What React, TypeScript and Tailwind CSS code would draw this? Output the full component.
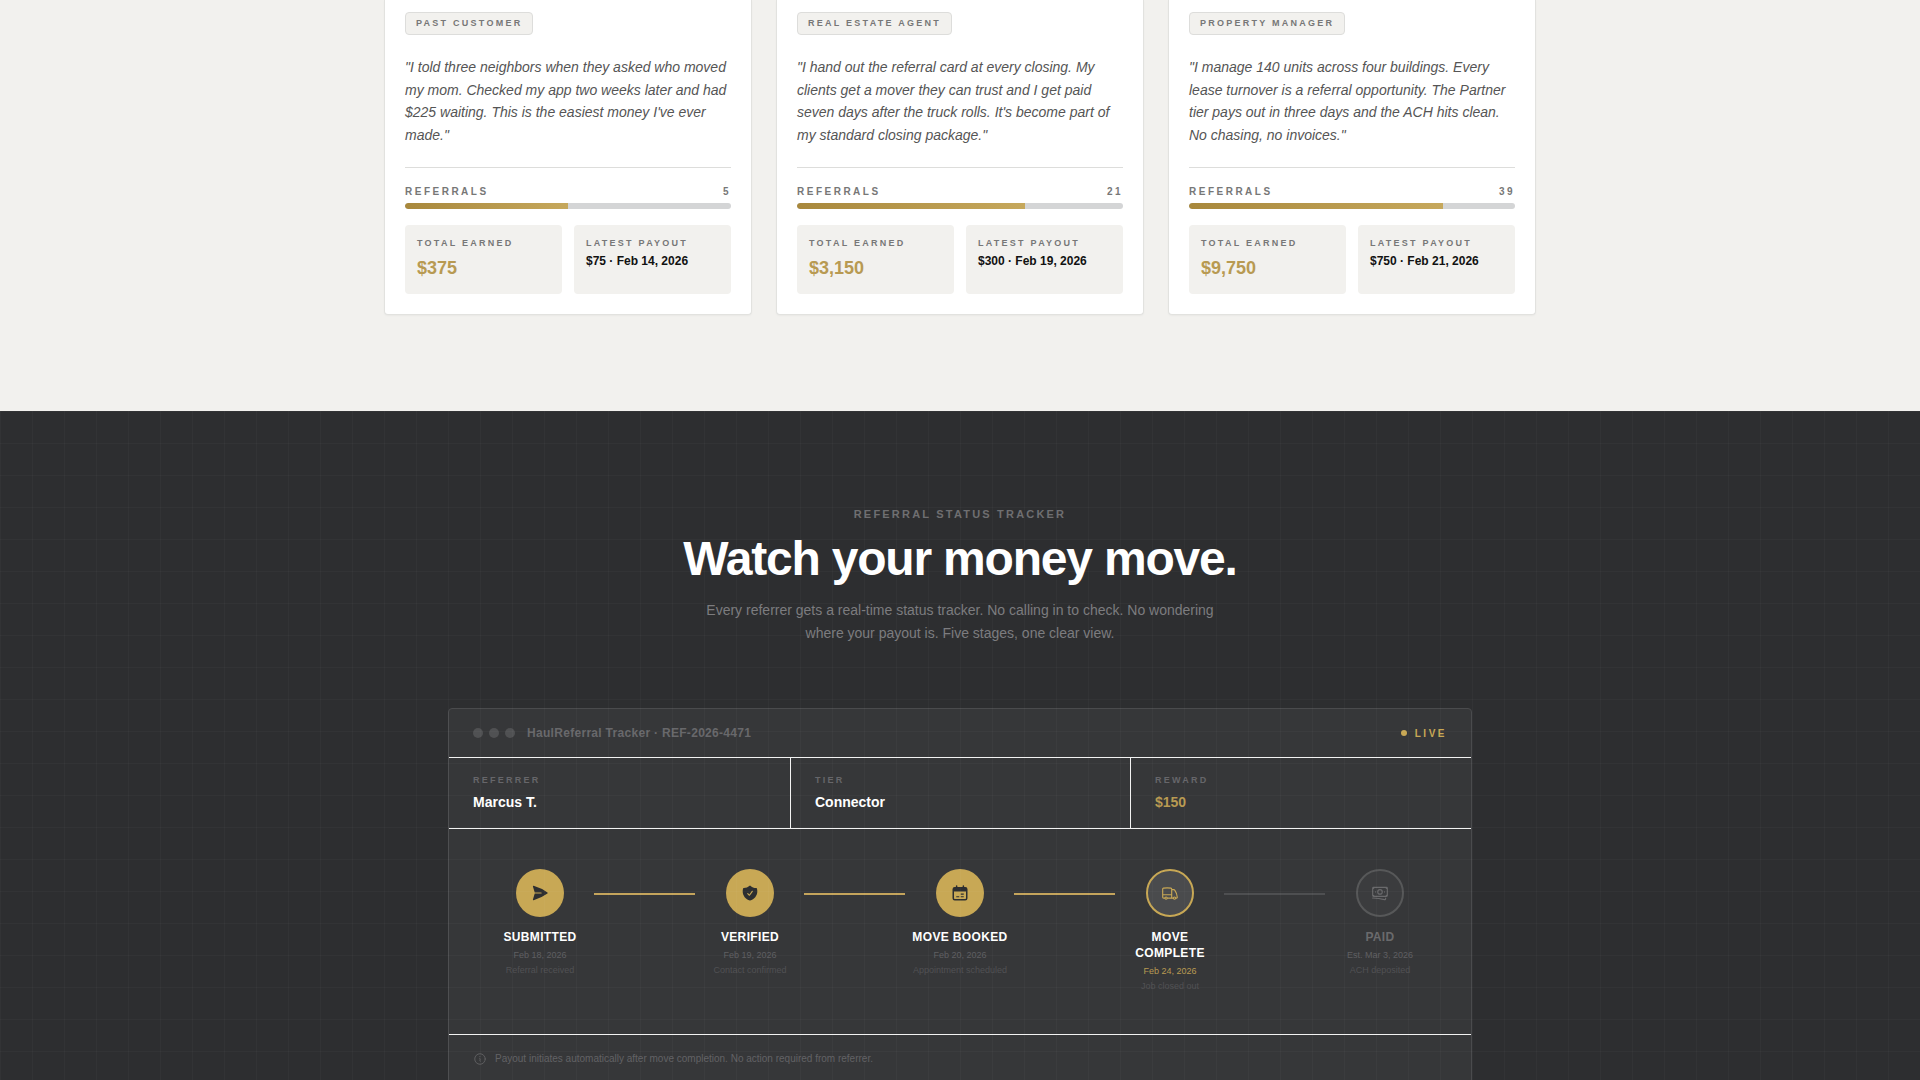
import React from "react";
import {
  HiPaperAirplane,
  HiShieldCheck,
  HiOutlineTruck,
  HiOutlineBanknotes,
  HiOutlineInformationCircle,
} from "react-icons/hi2";

// heavier than the hi2 outline one: the header band is filled in the design
function CalendarIcon({ className }: { className?: string }) {
  return (
    <svg viewBox="0 0 24 24" fill="none" stroke="currentColor" strokeWidth="2" className={className}>
      <path d="M7.5 2.5v4M16.5 2.5v4" strokeLinecap="round" />
      <rect x="3" y="5" width="18" height="16" rx="2" />
      <path d="M3 7a2 2 0 0 1 2-2h14a2 2 0 0 1 2 2v3H3z" fill="currentColor" stroke="none" />
      <path d="M7 17h4M13 17h4M13 13.5h4" strokeWidth="1.5" />
    </svg>
  );
}

const partners = [
  {
    tag: "PAST CUSTOMER",
    quote:
      "\"I told three neighbors when they asked who moved my mom. Checked my app two weeks later and had $225 waiting. This is the easiest money I've ever made.\"",
    referrals: 5,
    fill: "w-1/2",
    earned: "$375",
    payout: "$75 · Feb 14, 2026",
  },
  {
    tag: "REAL ESTATE AGENT",
    quote:
      "\"I hand out the referral card at every closing. My clients get a mover they can trust and I get paid seven days after the truck rolls. It's become part of my standard closing package.\"",
    referrals: 21,
    fill: "w-[70%]",
    earned: "$3,150",
    payout: "$300 · Feb 19, 2026",
  },
  {
    tag: "PROPERTY MANAGER",
    quote:
      "\"I manage 140 units across four buildings. Every lease turnover is a referral opportunity. The Partner tier pays out in three days and the ACH hits clean. No chasing, no invoices.\"",
    referrals: 39,
    fill: "w-[78%]",
    earned: "$9,750",
    payout: "$750 · Feb 21, 2026",
  },
];

const details = [
  { label: "REFERRER", value: "Marcus T.", valueClass: "text-white" },
  { label: "TIER", value: "Connector", valueClass: "text-white" },
  { label: "REWARD", value: "$150", valueClass: "text-[#b89a52]" },
];

const steps = [
  { label: "SUBMITTED", date: "Feb 18, 2026", note: "Referral received", state: "done", Icon: HiPaperAirplane },
  { label: "VERIFIED", date: "Feb 19, 2026", note: "Contact confirmed", state: "done", Icon: HiShieldCheck },
  { label: "MOVE BOOKED", date: "Feb 20, 2026", note: "Appointment scheduled", state: "done", Icon: CalendarIcon },
  { label: "MOVE COMPLETE", date: "Feb 24, 2026", note: "Job closed out", state: "active", Icon: HiOutlineTruck },
  { label: "PAID", date: "Est. Mar 3, 2026", note: "ACH deposited", state: "pending", Icon: HiOutlineBanknotes },
];

function PartnerCard({ partner }: { partner: (typeof partners)[number] }) {
  return (
    <div className="bg-white border border-t-0 border-[#e2e2df] rounded-b px-5 pt-3 pb-5 shadow-[0_1px_2px_rgba(0,0,0,0.04)]">
      <span className="block w-fit h-[23px] px-[10px] border border-[#dddddb] rounded-sm bg-[#f2f1ee] text-[9px] leading-[20px] font-bold tracking-[0.25em] text-[#777]">
        {partner.tag}
      </span>
      <p className="mt-[21px] h-[90px] text-sm leading-[22.5px] italic text-[#555]">
        {partner.quote}
      </p>
      <div className="mt-[21px] border-t border-[#dddddb] pt-[18px]">
        <div className="flex justify-between text-[10px] leading-3 font-bold tracking-[0.25em] text-[#777]">
          <span>REFERRALS</span>
          <span>{partner.referrals}</span>
        </div>
        <div className="mt-[5px] h-[6px] rounded-full bg-[#d4d5d6] overflow-hidden">
          <div className={`h-full rounded-l-full bg-gradient-to-r from-[#a8883c] to-[#c6a85c] ${partner.fill}`} />
        </div>
      </div>
      <div className="mt-4 grid grid-cols-2 gap-3">
        <div className="h-[69px] rounded bg-[#f2f1ee] px-3 pt-3">
          <div className="text-[9px] leading-3 font-bold tracking-[0.25em] text-[#777]">TOTAL EARNED</div>
          <div className="mt-[7px] text-lg leading-6 font-bold text-[#b89a52]">{partner.earned}</div>
        </div>
        <div className="h-[69px] rounded bg-[#f2f1ee] px-3 pt-3">
          <div className="text-[9px] leading-3 font-bold tracking-[0.25em] text-[#777]">LATEST PAYOUT</div>
          <div className="mt-1 text-xs leading-4 font-bold text-[#111]">{partner.payout}</div>
        </div>
      </div>
    </div>
  );
}

function Step({ step }: { step: (typeof steps)[number] }) {
  const { Icon, state } = step;
  let circleClass = "bg-[#c8a855] text-[#2d2e30]";
  if (state === "active") circleClass = "bg-[#4a4b4d] border-2 border-[#c8a855] text-[#c8a855]";
  if (state === "pending") circleClass = "bg-[#3b3c3e] border-2 border-[#575859] text-[#6a6a6c]";

  return (
    <div className="w-[100px] shrink-0 flex flex-col items-center text-center">
      <div className={`w-12 h-12 rounded-full flex items-center justify-center ${circleClass}`}>
        <Icon className="w-[18px] h-[18px]" />
      </div>
      <div className={`mt-3 text-xs leading-4 font-bold tracking-[0.03em] ${state === "pending" ? "text-[#6a6a6c]" : "text-white"}`}>
        {step.label}
      </div>
      <div className={`mt-[3px] text-[9px] leading-[14px] whitespace-nowrap ${state === "active" ? "text-[#b89a52]" : "text-[#5f5f62]"}`}>
        {step.date}
      </div>
      <div className="mt-px text-[9px] leading-[14px] whitespace-nowrap text-[#515154]">{step.note}</div>
    </div>
  );
}

export default function App() {
  return (
    <div className="h-screen overflow-hidden bg-[#f2f1ee] font-['Liberation_Sans',Arial,sans-serif]">
      <section className="pb-24">
        <div className="w-[1152px] mx-auto grid grid-cols-3 gap-6">
          {partners.map((partner) => (
            <PartnerCard key={partner.tag} partner={partner} />
          ))}
        </div>
      </section>

      <section className="relative bg-[#2d2e30] pt-[96px] h-[800px]">
        <div className="text-center">
          <div className="text-[11px] leading-[14px] font-bold tracking-[0.2em] text-[#6f6f71]">
            REFERRAL STATUS TRACKER
          </div>
          <h2 className="mt-[9px] text-5xl leading-[58px] font-bold tracking-[-0.025em] text-white">
            Watch your money move.
          </h2>
          <p className="mt-[11px] w-[520px] mx-auto text-sm leading-[23px] text-[#7c7c7f]">
            Every referrer gets a real-time status tracker. No calling in to check. No wondering where your payout is. Five stages, one clear view.
          </p>
        </div>

        <div className="mt-[63px] w-[1024px] mx-auto bg-[#363739] border border-[#4a4b4d] rounded-t">
          <div className="h-12 px-6 flex items-center justify-between">
            <div className="flex items-center">
              <div className="flex gap-[6px]">
                <span className="w-[10px] h-[10px] rounded-full bg-[#505153]" />
                <span className="w-[10px] h-[10px] rounded-full bg-[#505153]" />
                <span className="w-[10px] h-[10px] rounded-full bg-[#505153]" />
              </div>
              <span className="ml-3 text-xs font-bold tracking-[0.025em] text-[#68686b]">
                HaulReferral Tracker · REF-2026-4471
              </span>
            </div>
            <div className="flex items-center gap-2 text-[10px] font-bold tracking-[0.25em] text-[#c8a855]">
              <span className="w-[6px] h-[6px] rounded-full bg-[#c8a855]" />
              LIVE
            </div>
          </div>

          <div className="grid grid-cols-[342px_340px_1fr] border-y border-[#f2f2f2]">
            {details.map((detail, i) => (
              <div key={detail.label} className={`h-[70px] px-6 pt-4 ${i < 2 ? "border-r border-[#f2f2f2]" : ""}`}>
                <div className="text-[9px] leading-3 font-bold tracking-[0.25em] text-[#66666a]">{detail.label}</div>
                <div className={`mt-2 text-sm leading-4 font-bold ${detail.valueClass}`}>{detail.value}</div>
              </div>
            ))}
          </div>

          <div className="h-[206px] pt-10 px-[41px] flex items-start border-b border-[#f2f2f2]">
            {steps.map((step, i) => (
              <React.Fragment key={step.label}>
                <Step step={step} />
                {i < steps.length - 1 && (
                  <div className={`flex-1 h-[2px] ml-1 mr-[5px] mt-[24px] ${step.state === "active" ? "bg-[#4e4f51]" : "bg-[#c4a45c]"}`} />
                )}
              </React.Fragment>
            ))}
          </div>

          <div className="px-6 pt-4 pb-10 flex items-center gap-2 text-[10px] leading-4 text-[#626265]">
            <HiOutlineInformationCircle className="w-[14px] h-[14px] shrink-0" />
            Payout initiates automatically after move completion. No action required from referrer.
          </div>
        </div>

        {/* faint blueprint grid, sits over the panel as well */}
        <div className="absolute inset-0 pointer-events-none bg-[linear-gradient(rgba(255,255,255,0.025)_1px,transparent_1px),linear-gradient(90deg,rgba(255,255,255,0.025)_1px,transparent_1px)] bg-[size:32px_32px]" />
      </section>
    </div>
  );
}
